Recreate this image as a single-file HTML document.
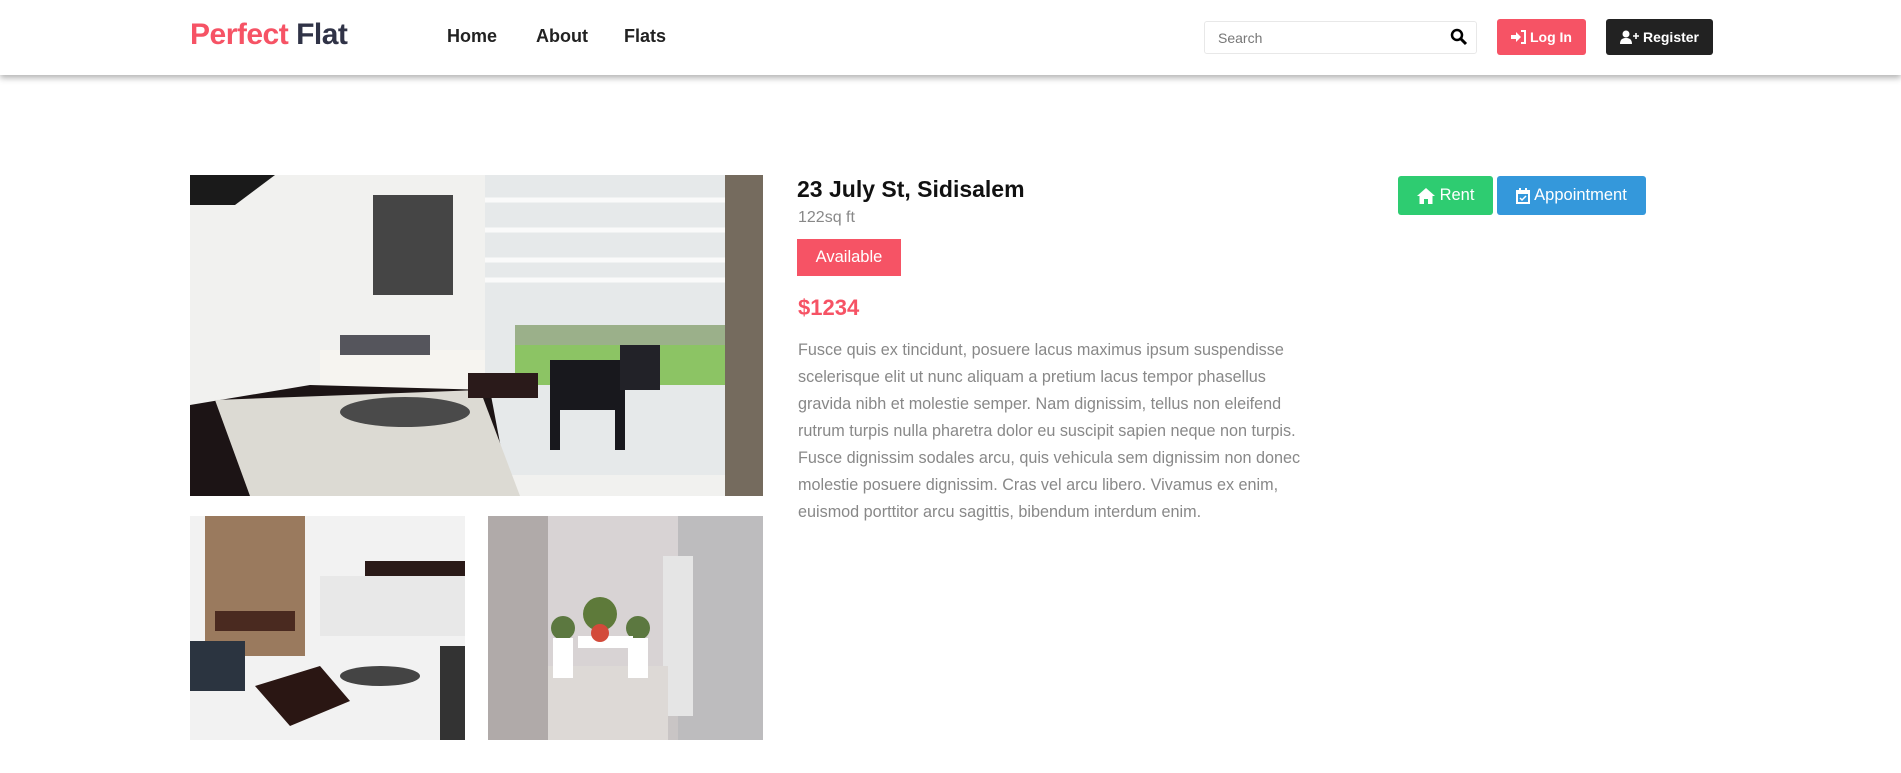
<!DOCTYPE html>
<html><head><meta charset="utf-8"><style>
*{margin:0;padding:0;box-sizing:border-box}
body{width:1901px;height:773px;overflow:hidden;background:#fff;font-family:"Liberation Sans",sans-serif;position:relative}
.nav{position:absolute;left:0;top:0;width:1901px;height:75px;background:#fff;box-shadow:0 3px 6px rgba(0,0,0,.3)}
.abs{position:absolute}
.logo{left:190px;top:18px;font-size:30px;font-weight:bold;letter-spacing:-0.5px}
.nl{top:26px;font-size:18px;font-weight:bold;color:#222}
.search{left:1204px;top:21px;width:273px;height:33px;border:1px solid #e8e8e8;border-radius:3px;font-size:14px;color:#777;padding:8px 13px}
.btn{border-radius:3px;color:#fff;font-weight:bold;font-size:14px;display:flex;align-items:center;justify-content:center}
.p{color:#888;font-size:16.2px;line-height:27px;width:520px}
</style></head><body>
<div class="nav">
<div class="abs logo"><span style="color:#f65365">Perfect</span> <span style="color:#303347">Flat</span></div>
<div class="abs nl" style="left:447px">Home</div>
<div class="abs nl" style="left:536px">About</div>
<div class="abs nl" style="left:624px">Flats</div>
<div class="abs search">Search</div>
<svg class="abs" style="left:1450px;top:28px" width="18" height="18" viewBox="0 0 18 18"><circle cx="7" cy="7" r="5" fill="none" stroke="#000" stroke-width="2.5"/><path d="M11 11l5 5" stroke="#000" stroke-width="3"/></svg>
<div class="abs btn" style="left:1497px;top:19px;width:89px;height:36px;background:#f65365"><svg width="16" height="14" viewBox="0 0 16 14" style="margin-right:3px"><path d="M0 5h5V2l5 5-5 5V9H0z" fill="#fff"/><path d="M10 1h4v12h-4" fill="none" stroke="#fff" stroke-width="2"/></svg>Log In</div>
<div class="abs btn" style="left:1606px;top:19px;width:107px;height:36px;background:#222"><svg width="20" height="14" viewBox="0 0 20 14" style="margin-right:3px"><circle cx="6" cy="4" r="3.5" fill="#fff"/><path d="M0 14c0-5 3-6 6-6s6 1 6 6z" fill="#fff"/><path d="M13 6h6M16 3v6" stroke="#fff" stroke-width="1.6"/></svg>Register</div>
</div>

<svg class="abs" style="left:190px;top:175px" width="573" height="321" viewBox="0 0 573 321">
<rect width="573" height="321" fill="#f1f1ef"/>
<polygon points="0,0 85,0 45,30 0,30" fill="#1a1a1a"/>
<rect x="295" y="0" width="240" height="300" fill="#e6e9ea"/>
<g stroke="#fafafa" stroke-width="5"><line x1="295" y1="25" x2="535" y2="25"/><line x1="295" y1="55" x2="535" y2="55"/><line x1="295" y1="85" x2="535" y2="85"/><line x1="295" y1="105" x2="535" y2="105"/></g>
<rect x="325" y="150" width="210" height="25" fill="#9bb08a"/>
<rect x="325" y="170" width="210" height="40" fill="#8cc464"/>
<rect x="535" y="0" width="38" height="321" fill="#756b5e"/>
<rect x="183" y="20" width="80" height="100" fill="#454545"/>
<rect x="130" y="175" width="165" height="45" fill="#f6f4f0"/>
<rect x="150" y="160" width="90" height="20" fill="#55555c"/>
<polygon points="0,230 120,210 300,215 320,321 0,321" fill="#1c1415"/>
<polygon points="25,225 290,215 330,321 60,321" fill="#dcdad3"/>
<ellipse cx="215" cy="237" rx="65" ry="15" fill="#4a4a4a"/>
<rect x="278" y="198" width="70" height="25" fill="#2a1a1a"/>
<rect x="360" y="185" width="75" height="50" fill="#18181d"/>
<rect x="360" y="235" width="10" height="40" fill="#18181d"/>
<rect x="425" y="235" width="10" height="40" fill="#18181d"/>
<rect x="430" y="170" width="40" height="45" fill="#222228"/>
</svg>

<svg class="abs" style="left:190px;top:516px" width="275" height="224" viewBox="0 0 275 224">
<rect width="275" height="224" fill="#f2f2f2"/>
<rect x="15" y="0" width="100" height="140" fill="#9a7a5e"/>
<rect x="25" y="95" width="80" height="20" fill="#4a2a20"/>
<rect x="130" y="60" width="145" height="60" fill="#e8e8e8"/>
<rect x="175" y="45" width="100" height="15" fill="#2a1a18"/>
<rect x="0" y="125" width="55" height="50" fill="#2b3440"/>
<polygon points="65,170 130,150 160,185 100,210" fill="#2a1613"/>
<ellipse cx="190" cy="160" rx="40" ry="10" fill="#444"/>
<rect x="250" y="130" width="25" height="94" fill="#333"/>
</svg>

<svg class="abs" style="left:488px;top:516px" width="275" height="224" viewBox="0 0 275 224">
<rect width="275" height="224" fill="#c9c5c5"/>
<rect x="0" y="0" width="60" height="224" fill="#b0aaa9"/>
<rect x="60" y="0" width="130" height="150" fill="#d8d3d4"/>
<rect x="190" y="0" width="85" height="224" fill="#bdbcbe"/>
<rect x="175" y="40" width="30" height="160" fill="#e5e5e5"/>
<rect x="60" y="150" width="120" height="74" fill="#ddd9d6"/>
<circle cx="112" cy="98" r="17" fill="#5e7a3a"/>
<circle cx="75" cy="112" r="12" fill="#5c7840"/>
<circle cx="150" cy="112" r="12" fill="#5c7840"/>
<rect x="90" y="120" width="55" height="12" fill="#fff"/>
<circle cx="112" cy="117" r="9" fill="#d34a3a"/>
<rect x="65" y="122" width="20" height="40" fill="#fff"/>
<rect x="140" y="122" width="20" height="40" fill="#fff"/>
</svg>

<div class="abs" style="left:797px;top:176px;font-size:23px;font-weight:bold;color:#111">23 July St, Sidisalem</div>
<div class="abs" style="left:798px;top:209px;font-size:16px;color:#888">122sq ft</div>
<div class="abs" style="left:797px;top:239px;width:104px;height:37px;background:#f65365;color:#fff;font-size:16.5px;display:flex;align-items:center;justify-content:center">Available</div>
<div class="abs" style="left:798px;top:295px;font-size:22px;font-weight:bold;color:#f65365">$1234</div>
<div class="abs p" style="left:798px;top:337px">Fusce quis ex tincidunt, posuere lacus maximus ipsum suspendisse scelerisque elit ut nunc aliquam a pretium lacus tempor phasellus gravida nibh et molestie semper. Nam dignissim, tellus non eleifend rutrum turpis nulla pharetra dolor eu suscipit sapien neque non turpis. Fusce dignissim sodales arcu, quis vehicula sem dignissim non donec molestie posuere dignissim. Cras vel arcu libero. Vivamus ex enim, euismod porttitor arcu sagittis, bibendum interdum enim.</div>

<div class="abs btn" style="left:1398px;top:176px;width:95px;height:39px;background:#2ecc71;font-weight:normal;font-size:16.5px">
<svg width="18" height="16" viewBox="0 0 18 16" style="margin-right:5px"><path d="M9 0L0 8h2.5v8h4.5v-5h4v5h4.5V8H18z" fill="#fff"/></svg>Rent</div>
<div class="abs btn" style="left:1497px;top:176px;width:149px;height:39px;background:#3498db;font-weight:normal;font-size:16.5px">
<svg width="14" height="16" viewBox="0 0 14 16" style="margin-right:4px"><rect x="1" y="3" width="12" height="12" fill="none" stroke="#fff" stroke-width="2"/><rect x="1" y="3" width="12" height="3" fill="#fff"/><path d="M4 10l2 2 4-4" stroke="#fff" stroke-width="1.5" fill="none"/><rect x="3" y="0" width="2" height="4" fill="#fff"/><rect x="9" y="0" width="2" height="4" fill="#fff"/></svg>Appointment</div>
</body></html>
